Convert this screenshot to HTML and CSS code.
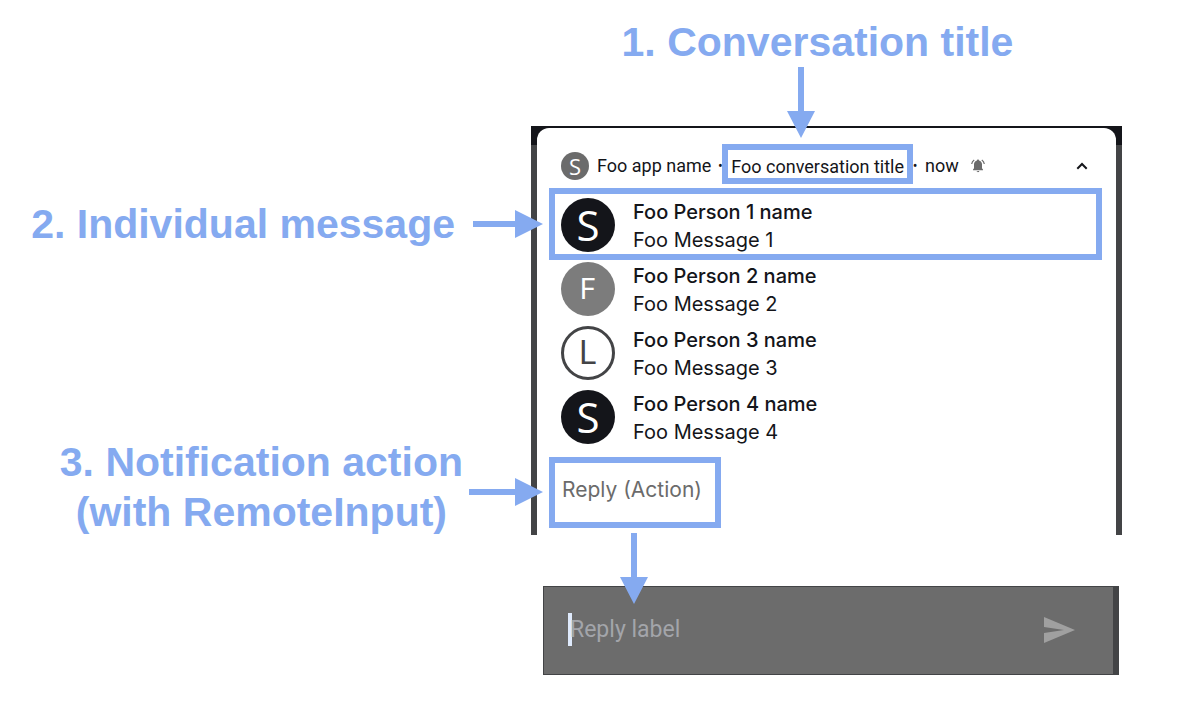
FILE: index.html
```html
<!DOCTYPE html>
<html lang="en">
<head>
<meta charset="utf-8">
<title>Messaging notification anatomy</title>
<link rel="stylesheet" href="styles.css">
</head>
<body>
<main class="figure">
  <h2 class="label title-label">1. Conversation title</h2>

  <div class="callouts">
    <div class="callout message-callout">
      <h2 class="label">2. Individual message</h2>
      <svg class="arrow-right" width="70" height="28" viewBox="0 0 70 28" aria-hidden="true"><path d="M0 11H42V0L70 14L42 28V17H0Z"/></svg>
    </div>
    <div class="callout action-callout">
      <h2 class="label">3. Notification action<br>(with RemoteInput)</h2>
      <svg class="arrow-right" width="74" height="28" viewBox="0 0 74 28" aria-hidden="true"><path d="M0 11H46V0L74 14L46 28V17H0Z"/></svg>
    </div>
  </div>

  <div class="device">
    <section class="shade">
      <div class="card">
        <header class="card-header">
          <span class="avatar avatar-small">S</span>
          <span class="app-name">Foo app name</span>
          <span class="dot">•</span>
          <span class="conversation">Foo conversation title
            <svg class="arrow-down arrow-title" width="28" height="71" viewBox="0 0 28 71" aria-hidden="true"><path d="M11 0H17V44H28L14 71L0 44H11Z"/></svg>
          </span>
          <span class="dot">•</span>
          <span class="time">now</span>
          <svg class="bell" width="14" height="14" viewBox="0 0 14 14" aria-hidden="true"><path d="M7 0.4C7.6 0.4 8 0.8 8 1.4C9.900 1.900 11 3.400 11 5.300V9.300L12 10.600V11.200H2V10.600L3 9.300V5.300C3 3.400 4.100 1.900 6 1.400C6 0.800 6.400 0.400 7 0.400ZM5.700 12H8.300C8.300 13.600 5.700 13.600 5.700 12Z" fill="#6b6b6b"/><path d="M3.200 1Q1 2.600 0.700 5M10.800 1Q13 2.600 13.300 5" fill="none" stroke="#6b6b6b" stroke-width="1.200"/></svg>
          <button class="collapse" type="button" aria-label="Collapse"><svg width="12" height="8" viewBox="0 0 12 8" aria-hidden="true"><path d="M1.300 6.700L6 2L10.700 6.700" fill="none" stroke="#14151a" stroke-width="2"/></svg></button>
        </header>

        <ul class="messages">
          <li class="message highlighted">
            <span class="avatar">S</span>
            <div class="copy"><p class="name">Foo Person 1 name</p><p class="text">Foo Message 1</p></div>
          </li>
          <li class="message">
            <span class="avatar avatar-gray">F</span>
            <div class="copy"><p class="name">Foo Person 2 name</p><p class="text">Foo Message 2</p></div>
          </li>
          <li class="message">
            <span class="avatar avatar-outline">L</span>
            <div class="copy"><p class="name">Foo Person 3 name</p><p class="text">Foo Message 3</p></div>
          </li>
          <li class="message">
            <span class="avatar">S</span>
            <div class="copy"><p class="name">Foo Person 4 name</p><p class="text">Foo Message 4</p></div>
          </li>
        </ul>

        <div class="action">
          <button class="reply-action" type="button">Reply (Action)</button>
          <svg class="arrow-down arrow-action" width="28" height="71" viewBox="0 0 28 71" aria-hidden="true"><path d="M11 0H17V44H28L14 71L0 44H11Z"/></svg>
        </div>
      </div>
    </section>

    <form class="reply-bar">
      <span class="caret"></span>
      <input class="reply-input" type="text" placeholder="Reply label" aria-label="Reply label">
      <button class="send" type="button" aria-label="Send"><svg width="32" height="26" viewBox="0 0 32 26" aria-hidden="true"><path d="M0 0L31 13L0 26V16L20 13L0 10Z" fill="#a0a0a0"/></svg></button>
    </form>
  </div>
</main>
</body>
</html>
```

FILE: styles.css
```css
* {
  box-sizing: border-box;
}

body {
  margin: 0;
  background: #fff;
  color: #14151a;
  font-family: Roboto, sans-serif;
}

h2, p, ul {
  margin: 0;
  padding: 0;
}

button {
  margin: 0;
  padding: 0;
  border: 0;
  background: none;
  font: inherit;
}

svg {
  display: block;
  flex: none;
}

.figure {
  display: grid;
  grid-template-columns: 531fr 591fr 59fr;
  grid-template-rows: auto auto;
}

.label {
  color: #85aaf0;
  font: bold 41px/50px "Liberation Sans", Arial, sans-serif;
  text-align: center;
  white-space: nowrap;
}

.title-label {
  grid-column: 2;
  padding: 17px 18px 59px 0;
}

.callouts {
  grid-column: 1;
  display: flex;
  flex-direction: column;
  align-items: flex-end;
  padding-top: 73px;
  margin-right: -12px;
  z-index: 1;
}

.callout {
  display: flex;
  align-items: center;
  gap: 18px;
}

.action-callout {
  gap: 6px;
  margin-top: 188px;
}

.action-callout .arrow-right {
  margin-top: 10px;
}

.arrow-right,
.arrow-down {
  fill: #85aaf0;
}

.arrow-down {
  position: absolute;
  z-index: 1;
}

.arrow-title {
  bottom: 40px;
  left: 59px;
}

.arrow-action {
  top: 76px;
  left: 71px;
}

.shade {
  padding: 2px 6px 0;
  background: linear-gradient(#14151a 19px, #434446 19px);
}

.card {
  padding: 16px 14px 7px 12px;
  border-radius: 12px 12px 0 0;
  background: #fff;
}

.card-header {
  display: flex;
  align-items: center;
  height: 40px;
  margin-bottom: 4px;
  padding: 0 14px 0 12px;
  font-size: 18px;
  line-height: 34px;
  white-space: nowrap;
}

.avatar {
  display: flex;
  flex: none;
  align-items: center;
  justify-content: center;
  width: 54px;
  height: 54px;
  border-radius: 50%;
  background: #14151a;
  color: #fff;
  font: 42px/54px "Open Sans", sans-serif;
}

.avatar-small {
  width: 28px;
  height: 28px;
  margin-top: 4px;
  margin-right: 8px;
  background: #6b6b6b;
  font-size: 22px;
  line-height: 28px;
}

.avatar-gray {
  background: #7c7c7c;
  font: 28px/54px Inter, sans-serif;
}

.avatar-outline {
  border: 3px solid #434446;
  background: #fff;
  color: #434446;
  font: 32px/48px Inter, sans-serif;
}

.dot {
  width: 12px;
  padding-top: 4px;
  font-size: 14px;
  text-align: center;
}

.app-name,
.time,
.bell,
.collapse {
  padding-top: 4px;
}

.app-name {
  margin-right: 3px;
}

.conversation {
  position: relative;
  height: 40px;
  margin-left: -4px;
  padding: 0 3px;
  border: 6px solid #85aaf0;
}

.conversation + .dot {
  margin-left: -4px;
}

.time {
  margin-left: 4px;
}

.bell {
  height: 18px;
  margin-left: 12px;
}

.collapse {
  margin-left: auto;
}

.messages {
  list-style: none;
}

.message {
  display: flex;
  align-items: flex-start;
  gap: 18px;
  padding: 2px 12px 6px;
}

.highlighted {
  padding: 4px 6px 0;
  border: 6px solid #85aaf0;
}

.copy {
  font: 20px/28px Inter, sans-serif;
}

.name {
  font-weight: 500;
}

.action {
  position: relative;
  width: 172px;
  margin-top: 5px;
}

.reply-action {
  width: 100%;
  height: 71px;
  padding: 0 0 6px 7px;
  border: 6px solid #85aaf0;
  color: #6b6b6b;
  font: 21px/28px Inter, sans-serif;
  text-align: left;
  white-space: nowrap;
}

.reply-bar {
  display: flex;
  align-items: center;
  height: 89px;
  margin: 51px 3px 0 12px;
  padding: 0 37px 2px 24px;
  border: solid #434446;
  border-width: 1px 6px 1px 1px;
  background: #6c6c6c;
}

.caret {
  width: 4px;
  height: 33px;
  margin-right: -2px;
  background: #dfeafc;
}

.reply-input {
  flex: 1;
  min-width: 0;
  padding: 0;
  border: 0;
  outline: 0;
  background: none;
  color: #fff;
  font: 23px/32px Roboto, sans-serif;
}

.reply-input::placeholder {
  color: #a3a5aa;
  opacity: 1;
}
```
